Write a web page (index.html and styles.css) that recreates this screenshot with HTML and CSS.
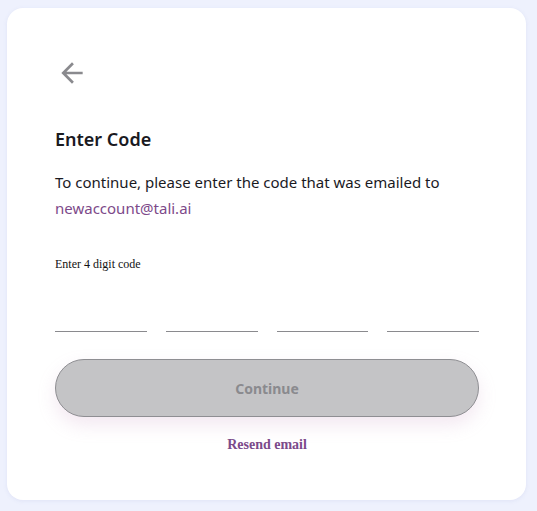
FILE: index.html
```html
<!DOCTYPE html>
<html>
<head>
<meta charset="utf-8">
<link rel="stylesheet" href="styles.css">
</head>
<body>
<div class="card">
  <button class="back" aria-label="Back">
    <svg width="32" height="32" viewBox="0 0 24 24"><path d="M20 11H7.83l5.59-5.59L12 4l-8 8 8 8 1.41-1.41L7.83 13H20v-2z" fill="#8a8a8e"/></svg>
  </button>
  <h1 class="title">Enter Code</h1>
  <p class="desc">To continue, please enter the code that was emailed to <span class="email">newaccount@tali.ai</span></p>
  <label class="label">Enter 4 digit code</label>
  <div class="code">
    <input class="digit" maxlength="1">
    <input class="digit" maxlength="1">
    <input class="digit" maxlength="1">
    <input class="digit" maxlength="1">
  </div>
  <button class="continue">Continue</button>
  <a class="resend">Resend email</a>
</div>
</body>
</html>
```
FILE: styles.css
```css
html, body { margin: 0; padding: 0; }
body {
  background: #eef1fd;
  width: 537px;
  height: 511px;
  padding: 8px 11px 11px 7px;
  box-sizing: border-box;
  font-family: "Noto Sans", "Open Sans", sans-serif;
}
.card {
  background: #fff;
  border-radius: 16px;
  height: 492px;
  box-sizing: border-box;
  padding: 49px 47px 0 48px;
  display: flex;
  flex-direction: column;
  box-shadow: 0 1px 4px rgba(120,130,200,0.12);
}
.back {
  background: none;
  border: 0;
  padding: 0;
  width: 32px;
  height: 32px;
  margin-left: 1px;
  cursor: pointer;
}
.back svg { display: block; }
.title {
  margin: 38px 0 0;
  font-size: 18px;
  font-weight: 600;
  color: #1a1a1f;
  line-height: 24px;
}
.desc {
  margin: 18px 0 0;
  font-size: 15px;
  line-height: 26px;
  color: #1a1a1f;
}
.email { color: #7d4a8a; }
.label {
  margin-top: 35px;
  font-family: "Liberation Serif", serif;
  font-size: 12px;
  line-height: 16px;
  color: #111;
}
.code {
  display: flex;
  gap: 19px;
  margin-top: 35px;
}
.digit {
  flex: 1;
  min-width: 0;
  border: 0;
  border-bottom: 1.5px solid #8a8a8e;
  height: 24px;
  padding: 0;
  outline: none;
  font-size: 16px;
  text-align: center;
}
.continue {
  margin-top: 27px;
  height: 58px;
  border-radius: 29px;
  border: 1px solid #8e8e92;
  background: #c4c4c6;
  color: #8a8a8e;
  font-family: "Noto Sans", "Open Sans", sans-serif;
  font-weight: 700;
  font-size: 14px;
  box-shadow: 0 8px 18px rgba(200,150,190,0.22);
}
.resend {
  margin-top: 20px;
  text-align: center;
  font-family: "Liberation Serif", serif;
  font-weight: 700;
  font-size: 14px;
  color: #7b4a8a;
  cursor: pointer;
}
```
